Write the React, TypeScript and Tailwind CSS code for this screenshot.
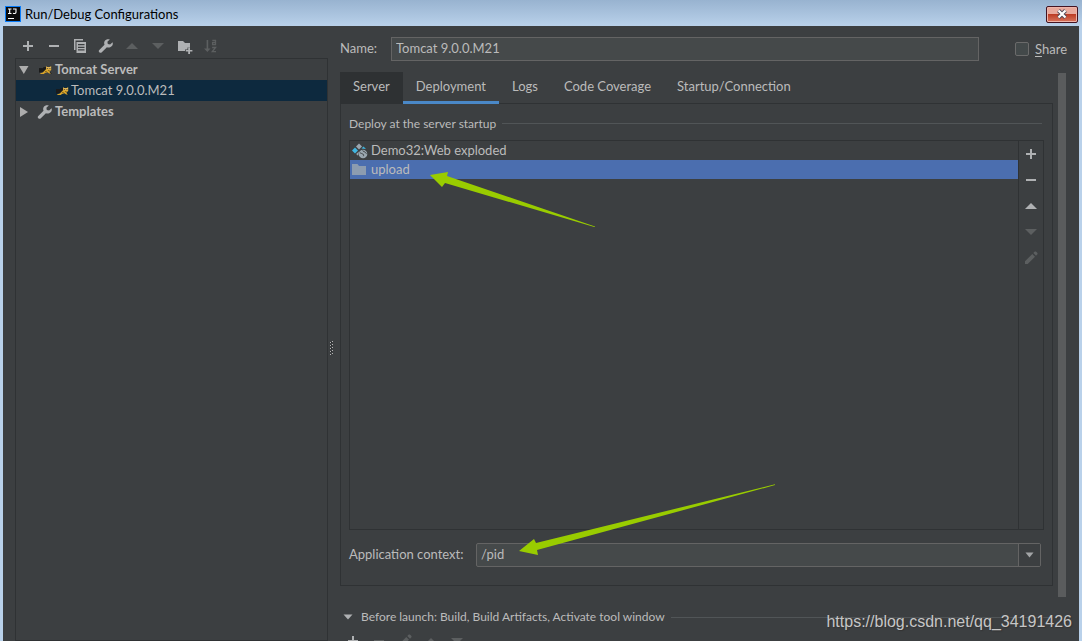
import { useState } from "react";
import type { ReactNode } from "react";

type IconProps = { className?: string };

function Svg({ className = "", children }: IconProps & { children: ReactNode }) {
  return (
    <svg viewBox="0 0 16 16" aria-hidden="true" className={`h-4 w-4 shrink-0 overflow-visible fill-current ${className}`}>
      {children}
    </svg>
  );
}

const AddIcon = (p: IconProps) => <Svg {...p}><path d="M7 3h2v4h4v2H9v4H7V9H3V7h4z" /></Svg>;
const RemoveIcon = (p: IconProps) => <Svg {...p}><path d="M3 7h10v2H3z" /></Svg>;
const CopyIcon = (p: IconProps) => (
  <Svg {...p}>
    <path d="M2 1h9v1.5H3.500V12H2z" />
    <path fillRule="evenodd" d="M4.500 4H14v11H4.500zM6 6v1.200h6.500V6zm0 2.700v1.200h6.500V8.700zm0 2.600v1.200h6.500v-1.200z" />
  </Svg>
);
const WrenchIcon = (p: IconProps) => (
  <Svg {...p}>
    <path d="M14.600 4.200 12.100 6.500 9.800 6 9.400 3.800 11.800 1.400C9.900.8 7.700 1.300 6.700 3c-.7 1.200-.7 2.500-.2 3.700L1.300 12c-.7.7-.7 1.700 0 2.300.7.700 1.600.7 2.300.1l5.300-5.200c1.500.6 3.500.3 4.700-.9 1.200-1.100 1.500-2.700 1-4.100z" />
  </Svg>
);
const UpIcon = (p: IconProps) => <Svg {...p}><path d="M2 11h12L8 5z" /></Svg>;
const DownIcon = (p: IconProps) => <Svg {...p}><path d="M2 5h12l-6 6z" /></Svg>;
const NewFolderIcon = (p: IconProps) => (
  <Svg {...p}>
    <path d="M2 3h5l2 2h5v4.500h-2.500v2H9V13H2z" />
    <path d="M12.200 9.500H14v2.400h2.400v1.700H14V16h-1.800v-2.400H9.800v-1.700h2.400z" />
  </Svg>
);
const SortIcon = (p: IconProps) => (
  <Svg {...p}>
    <path d="M4.600 2h1.600v8.500h2.300L5.400 14 2 10.500h2.600z" />
    <path d="M10.300 2.500h3.200v4.200h-2.900V4.600h2.600M10.100 9.500h3.500l-3.300 4.100h3.700" fill="none" stroke="currentColor" strokeWidth="1.300" />
  </Svg>
);
const PencilIcon = (p: IconProps) => (
  <Svg {...p}>
    <path d="M2 11.300 9.300 4 12 6.700 4.700 14H2zM10.300 3l1.200-1.200c.5-.5 1.200-.5 1.700 0l1 1c.5.5.5 1.200 0 1.700L13 5.700z" />
  </Svg>
);
const FolderIcon = (p: IconProps) => <Svg {...p}><path d="M0 2h5.500L7 4h7v9H0z" /></Svg>;
const ArtifactIcon = () => (
  <Svg className="text-[#9aa7b0]">
    <path d="m7 .5 3 3-3 3-3-3z" />
    <path d="m3 4.500 3 3-3 3-3-3zM9.500 5.500l2-2L14 6z" className="fill-[#40b6e0]" />
    <path d="m7 8.600-1 4.200L4.200 11z" />
    <circle cx="11" cy="11" r="4.300" />
    <path d="M7.900 10c1.300-.2 1.600.8 2.800 1 1 .2 1.200 1.200.6 2.200M10.700 7.500c.2 1 1.300 1 2.200 1.400.7.400.5 1.400 1.600 1.700" fill="none" className="stroke-[#3c3f41]" strokeWidth="1" />
  </Svg>
);
const TomcatIcon = () => (
  <svg viewBox="0 0 14 12" aria-hidden="true" className="h-3 w-3.5 shrink-0">
    <path d="M0 4.500h3.500L5 3.500h3L6.500 6 4 7.500 0 8.200M11 8l1.500 1.800" stroke="#1b1b1b" strokeWidth=".8" fill="#1b1b1b" />
    <path d="M7 2.200 8.300 3h2.400l1.500-.8V6L11 7l-.7.800 1.500 1.700h-1.600L8.400 8.300l-2.500.6-1 1.100H1.300V9.200l2.500-.7 2.400-2.600 1-.9z" fill="#d9a429" />
    <path d="m7.300 2.500 1.200 1h2l1.300-1v2.800H7.900z" fill="#e8c477" />
    <path d="M8.300 4h.9v1h-.9zm2.200 0h.9v1h-.9zM6 7.200h1.800v.6H6zM9 6h1.500v.6H9z" fill="#4b3610" />
  </svg>
);
const LogoIcon = () => (
  <svg viewBox="0 0 16 16" aria-hidden="true" className="h-4 w-4 shrink-0">
    <path d="M0 0h16v16H0z" fill="#087cfa" />
    <path d="M1 1h14v14H1z" fill="#0b0b0b" />
    <path d="M3 3h3.500M3 7.500h3.500M4.700 3v4.500M8 3h3v3.300c0 1-1.500 1.700-3 .9M3 12.500h6" fill="none" stroke="#fff" strokeWidth="1.100" />
  </svg>
);
const TreeArrow = ({ open }: { open: boolean }) => (
  <svg viewBox="0 0 10 10" aria-hidden="true" className="h-2.5 w-2.5 shrink-0 fill-[#adadad]">
    <path d={open ? "M0 1h9.500L4.800 9z" : "M1 0v10l8-5z"} />
  </svg>
);

type Tool = { label: string; icon: (p: IconProps) => ReactNode; enabled: boolean };

const treeTools: Tool[] = [
  { label: "Add New Configuration", icon: AddIcon, enabled: true },
  { label: "Remove Configuration", icon: RemoveIcon, enabled: true },
  { label: "Copy Configuration", icon: CopyIcon, enabled: true },
  { label: "Edit Templates", icon: WrenchIcon, enabled: true },
  { label: "Move Up", icon: UpIcon, enabled: false },
  { label: "Move Down", icon: DownIcon, enabled: false },
  { label: "Create New Folder", icon: NewFolderIcon, enabled: true },
  { label: "Sort Configurations", icon: SortIcon, enabled: false },
];
const artifactTools: Tool[] = [
  { label: "Add Artifact", icon: AddIcon, enabled: true },
  { label: "Remove Artifact", icon: RemoveIcon, enabled: true },
  { label: "Move Artifact Up", icon: UpIcon, enabled: true },
  { label: "Move Artifact Down", icon: DownIcon, enabled: false },
  { label: "Edit Artifact", icon: PencilIcon, enabled: false },
];
const launchTools: Tool[] = [
  { label: "Add Task", icon: AddIcon, enabled: true },
  { label: "Remove Task", icon: RemoveIcon, enabled: false },
  { label: "Edit Task", icon: PencilIcon, enabled: false },
  { label: "Move Task Up", icon: UpIcon, enabled: false },
  { label: "Move Task Down", icon: DownIcon, enabled: false },
];

function ToolButtons({ tools }: { tools: Tool[] }) {
  return tools.map(({ label, icon: Icon, enabled }) => (
    <button
      key={label}
      type="button"
      aria-label={label}
      disabled={!enabled}
      className={enabled ? "text-[#afb1b3]" : "text-[#5c5f60]"}
    >
      <Icon />
    </button>
  ));
}

const tabs = ["Server", "Deployment", "Logs", "Code Coverage", "Startup/Connection"];

export default function App() {
  const [tab, setTab] = useState("Deployment");
  return (
    <div className="relative flex h-screen flex-col overflow-hidden bg-[#b9d1ea] font-['Lato','Noto_Sans',sans-serif] text-[13px] leading-5 text-[#bbbbbb]">
      <header className="flex h-[26px] shrink-0 items-center gap-1 bg-linear-to-b from-[#98b3d0] to-[#b9d1ea] pt-0.5 pr-1 pl-[5px] text-black">
        <LogoIcon />
        <h1 className="flex-1">Run/Debug Configurations</h1>
        <button
          type="button"
          aria-label="Close"
          className="flex h-[17px] w-8 items-center justify-center rounded-xs border border-[#431422] bg-linear-to-b from-[#e9a99c] from-45% via-[#bd3d25] via-50% to-[#d8745c] inset-ring inset-ring-[#efb5aa]"
        >
          <svg viewBox="0 0 12 10" aria-hidden="true" className="h-2.5 w-3">
            <path d="m2.500 1.500 7 7m0-7-7 7" stroke="#514b59" strokeWidth="4" />
            <path d="m2.500 1.500 7 7m0-7-7 7" stroke="#fff" strokeWidth="2.200" />
          </svg>
        </button>
      </header>

      <div className="mx-[3px] flex min-h-0 flex-1 bg-[#3c3f41]">
        <aside className="ml-3 flex w-[313px] shrink-0 flex-col">
          <div className="flex h-8 shrink-0 items-center gap-2.5 pt-2 pl-[5px]">
            <ToolButtons tools={treeTools} />
          </div>
          <ul role="tree" aria-label="Configurations" className="flex-1 border border-[#2f3234]">
            <li role="treeitem" aria-expanded="true" className="font-bold">
              <div className="flex h-[21px] items-center pl-[3px]">
                <TreeArrow open />
                <span className="mr-0.5 ml-2.5 flex"><TomcatIcon /></span>
                <span className="pb-0.5">Tomcat Server</span>
              </div>
              <ul role="group" className="font-normal">
                <li role="treeitem" aria-selected="true" className="flex h-[21px] items-center bg-[#0d293e] pl-10">
                  <TomcatIcon />
                  <span className="pb-0.5 pl-px">Tomcat 9.0.0.M21</span>
                </li>
              </ul>
            </li>
            <li role="treeitem" aria-expanded="false" className="flex h-[21px] items-center pl-[3px] font-bold">
              <TreeArrow open={false} />
              <WrenchIcon className="mr-0.5 ml-2 text-[#afb1b3]" />
              <span className="pb-0.5">Templates</span>
            </li>
          </ul>
        </aside>

        <div role="separator" aria-orientation="vertical" className="flex w-3 shrink-0 items-center justify-start pl-0.5">
          <svg viewBox="0 0 4 16" aria-hidden="true" className="mt-7 h-4 w-1">
            <path d="M0 2h1v1H0zm2-1h1v1H2zM0 5h1v1H0zm2-1h1v1H2zM0 8h1v1H0zm2-1h1v1H2zM0 11h1v1H0zm2-1h1v1H2zM0 14h1v1H0zm2-1h1v1H2z" fill="#b5b5b5" />
            <path d="M1 2h1v1H1zm0 3h1v1H1zm0 3h1v1H1zm0 3h1v1H1z" fill="#202224" />
          </svg>
        </div>

        <main className="flex min-w-0 flex-1 flex-col pr-3">
          <div className="flex shrink-0 items-center pt-[11px]">
            <label htmlFor="config-name" className="w-[51px] pb-0.5">Name:</label>
            <input
              id="config-name"
              defaultValue="Tomcat 9.0.0.M21"
              className="h-6 min-w-0 flex-1 border border-[#646464] bg-[#45494a] px-1 pb-0.5 outline-none"
            />
            <label className="ml-9 flex items-center gap-1.5">
              <input type="checkbox" className="h-3.5 w-3.5 appearance-none rounded-xs border border-[#6b6b6b] bg-[#43494a]" />
              <span><u className="underline-offset-2">S</u>hare</span>
            </label>
          </div>

          <div className="mt-[11px] flex min-h-0 flex-1">
            <div className="flex min-w-0 flex-1 flex-col">
              <div role="tablist" className="flex h-8 shrink-0 border-b border-[#2f3234]">
                {tabs.map((name) => (
                  <button
                    key={name}
                    type="button"
                    role="tab"
                    aria-selected={tab === name}
                    onClick={() => setTab(name)}
                    className={`-mb-px border-b-3 px-[13px] pb-0.5 ${
                      tab === name ? "border-[#4a88c7]" : "border-transparent"
                    } ${name === "Server" ? "bg-[#2e3133]" : ""}`}
                  >
                    {name}
                  </button>
                ))}
              </div>

              <section role="tabpanel" className="shrink-0 border-x border-b border-[#2f3234] px-2 pb-[18px]">
                <div className="flex h-9 items-center gap-1.5 pt-1 pr-0.5 text-xs">
                  <h2>Deploy at the server startup</h2>
                  <span className="mb-px h-px flex-1 bg-[#515557]" />
                </div>
                <div className="flex h-[390px] border border-[#2f3234]">
                  <ul role="listbox" aria-label="Artifacts" className="min-w-0 flex-1">
                    <li role="option" aria-selected="false" className="flex h-[19px] items-center gap-[3px] pl-0.5">
                      <ArtifactIcon />
                      <span className="pb-0.5">Demo32:Web exploded</span>
                    </li>
                    <li role="option" aria-selected="true" className="flex h-[19px] items-center gap-[3px] bg-[#4b6eaf] pl-0.5">
                      <FolderIcon className="text-[#8c9cb0]" />
                      <span className="pb-0.5">upload</span>
                    </li>
                  </ul>
                  <div className="flex w-[25px] shrink-0 flex-col items-center gap-2.5 border-l border-[#2f3234] pt-[5px]">
                    <ToolButtons tools={artifactTools} />
                  </div>
                </div>
                <div className="mt-[13px] flex items-center pr-[3px]">
                  <label htmlFor="app-context" className="w-[127px] pb-0.5 whitespace-nowrap">Application context:</label>
                  <div className="relative flex min-w-0 flex-1">
                    <select id="app-context" className="h-6 w-full appearance-none rounded-xs border border-[#646464] bg-[#45494a] px-1 pb-0.5 outline-none">
                      <option>/pid</option>
                    </select>
                    <span className="pointer-events-none absolute inset-y-px right-px flex w-[22px] items-center justify-center border-l border-[#646464] bg-[#3c3f41]">
                      <svg viewBox="0 0 10 6" aria-hidden="true" className="h-1.5 w-2.5 fill-[#a3a5a7]"><path d="M.500.500h8l-4 5z" /></svg>
                    </span>
                  </div>
                </div>
              </section>

              <div className="mt-[21px] flex shrink-0 items-center text-xs leading-5">
                <button type="button" aria-expanded="true" className="flex items-center gap-2 pl-[3px]">
                  <svg viewBox="0 0 10 6" aria-hidden="true" className="h-1.5 w-2.5 fill-[#afb1b3]"><path d="M.5.500h9L5 5.500z" /></svg>
                  Before launch: Build, Build Artifacts, Activate tool window
                </button>
                <span className="ml-1.5 h-px flex-1 bg-[#515557]" />
              </div>
              <div className="mt-1.5 flex shrink-0 gap-2.5 pl-[5px]">
                <ToolButtons tools={launchTools} />
              </div>
            </div>
            <div className="mt-px mr-px mb-11 ml-[5px] w-2 shrink-0 bg-[#5a5c5d]" />
          </div>
        </main>
      </div>

      <svg viewBox="0 0 165 56" aria-hidden="true" className="pointer-events-none absolute top-[171px] left-[430px] h-14 w-[165px] fill-[#99cc00]">
        <path d="m0 4 18-3-1 4 148 50.500v.7L15 12l-3 4z" />
      </svg>
      <svg viewBox="0 0 256 71" aria-hidden="true" className="pointer-events-none absolute top-[484px] left-[519px] h-[71px] w-64 fill-[#99cc00]">
        <path d="M0 67 15 55l2 4L256 .3v.8L18 66l1 5z" />
      </svg>
      <p className="pointer-events-none absolute right-2.5 bottom-[9px] font-['Liberation_Sans',Arial,sans-serif] text-base leading-5 text-[#c6c6c6] [text-shadow:1px_1px_1px_#333333]">
        https://blog.csdn.net/qq_34191426
      </p>
    </div>
  );
}
